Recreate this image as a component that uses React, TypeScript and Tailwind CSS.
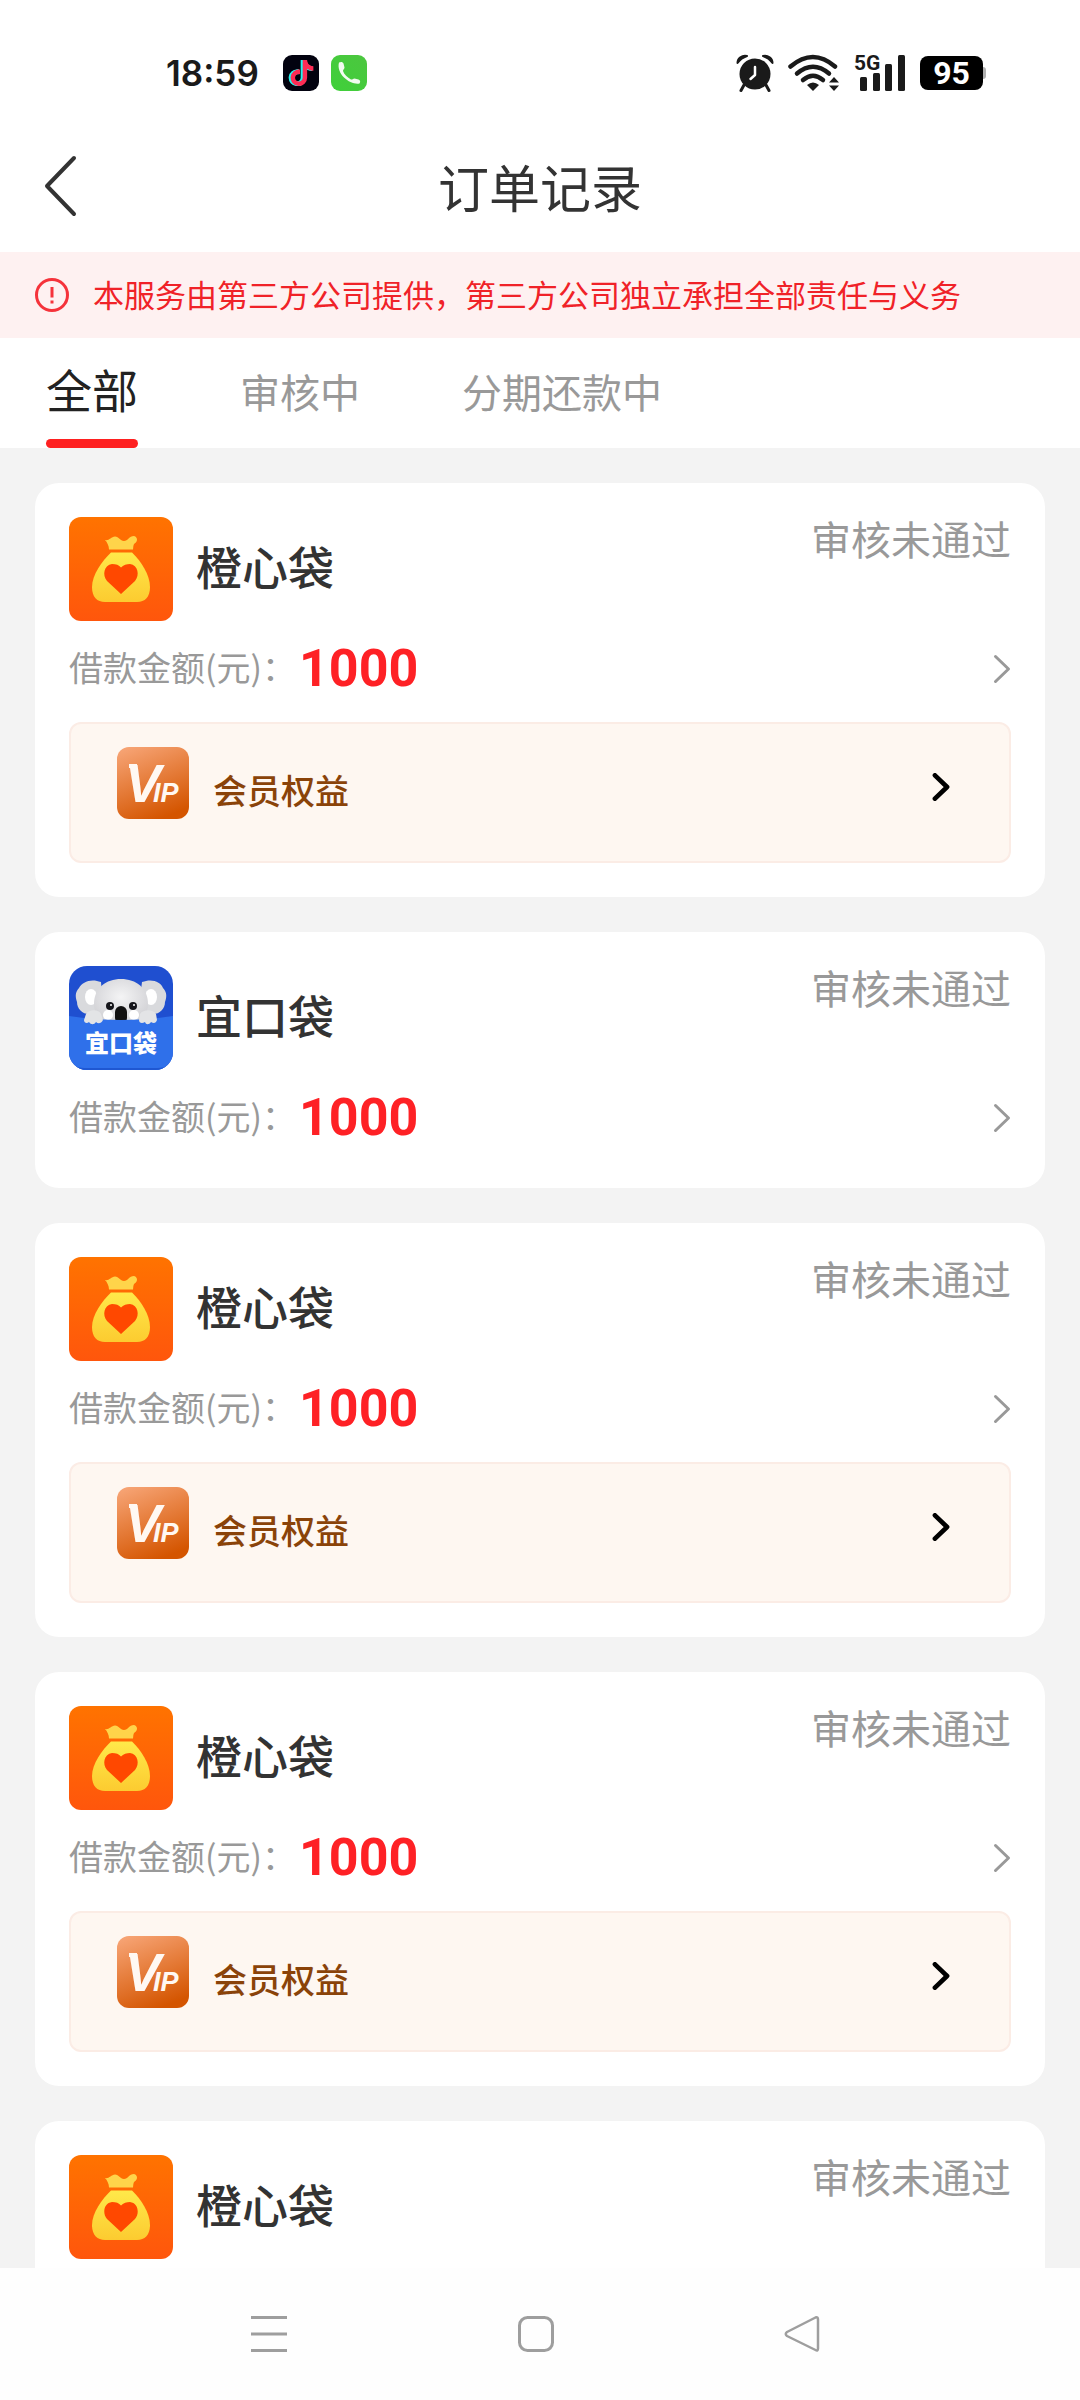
import React from "react";
import { FaTiktok } from "react-icons/fa";

type Order = {
  id: number;
  name: string;
  logo: "bag" | "koala";
  amount: number;
  status: string;
  vip: boolean;
};

const orders: Order[] = [
  { id: 1, name: "橙心袋", logo: "bag", amount: 1000, status: "审核未通过", vip: true },
  { id: 2, name: "宜口袋", logo: "koala", amount: 1000, status: "审核未通过", vip: false },
  { id: 3, name: "橙心袋", logo: "bag", amount: 1000, status: "审核未通过", vip: true },
  { id: 4, name: "橙心袋", logo: "bag", amount: 1000, status: "审核未通过", vip: true },
  { id: 5, name: "橙心袋", logo: "bag", amount: 1000, status: "审核未通过", vip: true },
];

const tabs = ["全部", "审核中", "分期还款中"];

const BagLogo = () => (
  <svg viewBox="0 0 104 104" className="h-[104px] w-[104px] shrink-0 rounded-xl">
    <defs>
      <linearGradient id="bag-bg" x1="0" y1="0" x2="0" y2="1">
        <stop offset="0" stopColor="#ff7300" />
        <stop offset="1" stopColor="#ff560c" />
      </linearGradient>
      <linearGradient id="bag-fill" x1="0" y1="0" x2="0" y2="1">
        <stop offset="0" stopColor="#ffe94a" />
        <stop offset="1" stopColor="#fccb30" />
      </linearGradient>
    </defs>
    <rect width="104" height="104" fill="url(#bag-bg)" />
    <path
      d="M40 32.5C40 29 38 25 36 23C40 24 42 20 46 19.500C50 19.500 51 24 55 24C59 24 60 19 65 19C69 20 69 25 65 27Q64 29 64 32.500Z"
      fill="#ffd44a"
    />
    <path
      d="M42 35.500H63C72 44 81 58 81 70C81 80 76 85 68 85H36C28 85 23 80 23 70C23 58 33 44 42 35.500Z"
      fill="url(#bag-fill)"
    />
    <path
      d="M52 77 38 64C33 58 35 48 43 47C47 47 50 48 52 50.500C54 48 58 47 61 47C69 48 71 58 66 64Z"
      fill="#ff4800"
    />
  </svg>
);

const KoalaLogo = () => (
  <svg viewBox="0 0 104 104" className="h-[104px] w-[104px] shrink-0 rounded-[18px]">
    <defs>
      <radialGradient id="koala-head" cx="0.5" cy="0.4" r="0.65">
        <stop offset="0" stopColor="#f4f4f5" />
        <stop offset="1" stopColor="#cfcfd3" />
      </radialGradient>
    </defs>
    <rect width="104" height="104" fill="#1f4fd0" />
    <g fill="#d9dadd">
      <path d="M32 16C22 12 13 16 10 22C5 27 7 33 8 36C8 43 14 49 22 48L34 40Z" />
      <path d="M73 16C83 12 92 16 94 22C99 27 97 33 96 36C96 43 90 49 82 48L70 40Z" />
    </g>
    <ellipse cx="22" cy="31" rx="6" ry="8" fill="#fff" />
    <ellipse cx="82" cy="31" rx="6" ry="8" fill="#fff" />
    <path d="M25 38C25 22 37 13 52 13C67 13 79 22 79 38C79 50 70 58 52 58C34 58 25 50 25 38Z" fill="url(#koala-head)" />
    <circle cx="39" cy="49" r="5" fill="#fff" />
    <circle cx="65" cy="49" r="5" fill="#fff" />
    <circle cx="41" cy="40" r="4" fill="#15151a" />
    <circle cx="64" cy="40" r="4" fill="#15151a" />
    <circle cx="42" cy="39" r="1" fill="#fff" />
    <circle cx="65" cy="39" r="1" fill="#fff" />
    <rect x="46" y="40" width="12" height="18" rx="6" fill="#111" />
    <path d="M0 50Q52 58 104 50V104H0Z" fill="#2f70ea" />
    <path d="M0 88Q0 102 16 102H88Q104 102 104 88V104H0Z" fill="#1f57d2" />
    <g fill="#e3e4e6">
      <path d="M17 48C20 43 30 43 32 48L34 54C32 58 29 58 27 56C25 59 22 59 20 56C18 58 15 57 15 54Z" />
      <path d="M71 48C74 43 84 43 87 48L88 54C87 57 85 58 82 56C80 59 77 59 76 56C73 58 70 57 70 54Z" />
    </g>
    <text
      x="52"
      y="86"
      textAnchor="middle"
      fill="#fff"
      fontSize="24"
      fontWeight="900"
      fontFamily="'Noto Sans CJK SC', sans-serif"
    >
      宜口袋
    </text>
  </svg>
);

const VipLogo = () => (
  <svg viewBox="0 0 72 72" className="h-[72px] w-[72px] shrink-0 rounded-xl">
    <defs>
      <linearGradient id="vip-bg" x1="0.2" y1="0" x2="0.6" y2="1">
        <stop offset="0" stopColor="#f6a272" />
        <stop offset="1" stopColor="#d45500" />
      </linearGradient>
    </defs>
    <rect width="72" height="72" fill="url(#vip-bg)" />
    <text
      x="8"
      y="55"
      fontSize="54"
      fontWeight="700"
      fontStyle="italic"
      fontFamily="'Liberation Sans', Arial, sans-serif"
      fill="#fff8f2"
    >
      V
      <tspan dx="-8" fontSize="27">
        IP
      </tspan>
    </text>
    <rect x="12" y="17" width="8" height="4" fill="#fff8f2" />
  </svg>
);

const AlarmIcon = () => (
  <svg viewBox="0 0 38 38" className="h-[38px] w-[38px]">
    <path d="M8 31 5 36.500M30 31 33 36.500" stroke="#1a1a1a" strokeWidth="3" strokeLinecap="round" />
    <circle cx="19" cy="20" r="15.500" fill="#1a1a1a" />
    <path d="M1.500 9C1.500 4 6 1 11 2Q5 4 1.500 9ZM36.500 9C36.500 4 32 1 27 2Q33 4 36.500 9Z" fill="#1a1a1a" stroke="#1a1a1a" strokeWidth="2" strokeLinejoin="round" />
    <path d="M19 13V21L14.500 25" fill="none" stroke="#fff" strokeWidth="2.500" strokeLinecap="round" strokeLinejoin="round" />
  </svg>
);

const WifiIcon = () => (
  <svg viewBox="0 0 52 38" className="h-[38px] w-[52px]">
    <g fill="none" stroke="#1a1a1a" strokeWidth="4.500" strokeLinecap="round">
      <path d="M2.500 12.500Q25 -6.500 47 12.500" />
      <path d="M9 19.500Q25 6 41 19.500" />
      <path d="M15 26Q25 17.500 35 26" />
    </g>
    <path d="M19 31Q25 26 31 31L25 37Z" fill="#1a1a1a" />
    <path d="M41 28.500 46 23 51 28.500ZM41 31.500 46 37 51 31.500Z" fill="#1a1a1a" />
  </svg>
);

const SignalIcon = () => (
  <svg viewBox="0 -6 52 50" className="h-[50px] w-[52px]">
    <text x="0" y="16" fontSize="21" fontWeight="700" fill="#1a1a1a" fontFamily="Roboto, sans-serif">
      5G
    </text>
    <g fill="#1a1a1a">
      <rect x="6" y="23" width="7" height="14" rx="1.500" />
      <rect x="19" y="19" width="7" height="18" rx="1.500" />
      <rect x="31" y="10" width="7" height="27" rx="1.500" />
      <rect x="44" y="1" width="7" height="36" rx="1.500" />
    </g>
  </svg>
);

const PhoneIcon = () => (
  <svg viewBox="0 0 36 36" className="h-9 w-9">
    <defs>
      <linearGradient id="phone-bg" x1="1" y1="0" x2="0" y2="1">
        <stop offset="0" stopColor="#4cc63f" />
        <stop offset="1" stopColor="#3fd03a" />
      </linearGradient>
    </defs>
    <rect width="36" height="36" rx="9" fill="url(#phone-bg)" />
    <path
      d="M8 7.500C10 6.500 12 7 12.500 8.500L13.500 12.500C13.500 14 12 14.500 12 16C13 19.500 16.500 22.500 20 24.500C21.500 25 22 23.500 23.500 23.500L27.500 24.500C29.500 25 29.500 27 28.500 28.500C24 29.500 17.500 27 13 22.500C9 18.500 6.500 13 8 7.500Z"
      fill="#f2fbf0"
    />
  </svg>
);

const StatusBar = () => (
  <div className="flex h-[122px] shrink-0 items-center justify-between pt-6 pr-[94px] pl-[166px]">
    <div className="flex items-center gap-3">
      <span className="mr-3 font-[Inter,sans-serif] text-[35px] leading-10 font-semibold text-[#1a1a1a]">18:59</span>
      <span className="grid h-9 w-9 place-items-center rounded-[9px] bg-[#02020f]">
        <FaTiktok className="col-start-1 row-start-1 h-[26px] w-[26px] -translate-x-px text-[#25f4ee]" />
        <FaTiktok className="col-start-1 row-start-1 h-[26px] w-[26px] translate-x-px text-[#fe2c55]" />
        <FaTiktok className="col-start-1 row-start-1 h-[26px] w-[26px] text-white" />
      </span>
      <PhoneIcon />
    </div>
    <div className="flex items-center gap-[14px]">
      <AlarmIcon />
      <WifiIcon />
      <SignalIcon />
      <div className="flex items-center">
        <span className="flex h-[34px] w-[63px] items-center justify-center rounded-lg bg-black font-[Roboto,sans-serif] text-[32px] leading-[34px] font-bold text-white">
          95
        </span>
        <span className="h-3 w-[3px] rounded-r-full bg-[#b0b0b0]" />
      </div>
    </div>
  </div>
);

const Chevron = ({ className, strokeWidth }: { className: string; strokeWidth: number }) => (
  <svg
    viewBox="0 0 18 30"
    className={className}
    fill="none"
    stroke="currentColor"
    strokeWidth={strokeWidth}
    strokeLinecap="round"
    strokeLinejoin="round"
  >
    <path d="M2.500 2.500 15.500 15 2.500 27.500" />
  </svg>
);

const OrderCard = ({ order }: { order: Order }) => (
  <article className="shrink-0 rounded-3xl bg-white px-[34px] py-[34px]">
    <div className="flex items-start justify-between">
      <div className="flex items-center gap-[23px]">
        {order.logo === "bag" ? <BagLogo /> : <KoalaLogo />}
        <h2 className="pb-2 text-[46px] leading-[60px] font-medium text-[#333]">{order.name}</h2>
      </div>
      <span className="text-[40px] leading-[42px] text-[#999]">{order.status}</span>
    </div>
    <button type="button" className="flex h-[84px] w-full items-center pt-3 text-left">
      <span className="pb-1 text-[34px] leading-10 text-[#999]">借款金额(元)：</span>
      <span className="ml-[3px] font-[Roboto,sans-serif] text-[52px] leading-[60px] font-bold text-[#fe2125]">
        {order.amount}
      </span>
      <Chevron className="ml-auto h-[30px] w-[18px] text-[#999]" strokeWidth={3} />
    </button>
    {order.vip && (
      <button
        type="button"
        className="mt-[17px] flex h-[141px] w-full items-start rounded-xl border-2 border-[#fbece5] bg-[#fef7f1] pt-[23px] pr-[59px] pl-[46px] text-left"
      >
        <VipLogo />
        <span className="ml-6 pt-4 text-[34px] leading-[54px] font-medium text-[#8a4309]">会员权益</span>
        <span className="ml-auto flex h-20 items-center">
          <Chevron className="h-7 w-[18px] text-black" strokeWidth={5} />
        </span>
      </button>
    )}
  </article>
);

const App: React.FC = () => {
  return (
    <div className="flex h-screen flex-col bg-white font-['Noto_Sans_CJK_SC',sans-serif]">
      <StatusBar />

      <header className="grid h-[130px] shrink-0 grid-cols-[1fr_auto_1fr] items-center px-[43px] pb-[3px]">
        <button type="button" aria-label="返回" className="w-9 text-[#333]">
          <svg viewBox="0 0 34 62" className="h-[62px] w-[34px]" fill="none" stroke="currentColor" strokeWidth="4" strokeLinecap="round" strokeLinejoin="round">
            <path d="M31 3 4 31 31 59" />
          </svg>
        </button>
        <h1 className="text-[51px] leading-[60px] text-[#333]">订单记录</h1>
      </header>

      <div className="flex h-[86px] shrink-0 items-center gap-[23px] bg-[#fef1f1] pl-[34px] text-[#f02228]">
        <svg viewBox="0 0 36 36" className="h-9 w-9 shrink-0" fill="none" stroke="#f5333b" strokeWidth="3">
          <circle cx="18" cy="18" r="15.500" />
          <path d="M18 10V20.500M18 23.500V26.500" />
        </svg>
        <p className="pb-[3px] text-[31px] leading-10 whitespace-nowrap">
          本服务由第三方公司提供，第三方公司独立承担全部责任与义务
        </p>
      </div>

      <div role="tablist" className="flex h-[110px] shrink-0 gap-[102px] px-[46px]">
        {tabs.map((tab, i) => (
          <button
            key={tab}
            type="button"
            role="tab"
            aria-selected={i === 0}
            className={
              i === 0
                ? "flex flex-col justify-between pt-5 text-[46px] leading-[60px] text-[#222]"
                : "pb-1 text-[40px] leading-[60px] text-[#999]"
            }
          >
            {tab}
            {i === 0 && <span className="h-[9px] w-full rounded-full bg-[#fe2020]" />}
          </button>
        ))}
      </div>

      <main className="flex min-h-0 flex-1 flex-col gap-[35px] overflow-y-auto bg-[#f3f3f3] px-[35px] pt-[35px] [scrollbar-width:none]">
        {orders.map((order) => (
          <OrderCard key={order.id} order={order} />
        ))}
      </main>

      <nav className="flex h-[132px] shrink-0 items-center justify-center gap-[229px] bg-[#fefefe] pr-2 text-[#9e9e9e]">
        <button type="button" aria-label="最近任务">
          <svg viewBox="0 0 38 38" className="h-[38px] w-[38px]" stroke="currentColor" strokeWidth="3">
            <path d="M1 2.500H37M1 19H37M1 35.500H37" />
          </svg>
        </button>
        <button type="button" aria-label="主屏幕">
          <svg viewBox="0 0 38 38" className="h-[38px] w-[38px]" fill="none" stroke="currentColor" strokeWidth="3">
            <rect x="2.500" y="2.500" width="33" height="33" rx="8" />
          </svg>
        </button>
        <button type="button" aria-label="后退">
          <svg viewBox="0 0 38 38" className="h-[38px] w-[38px]" fill="none" stroke="currentColor" strokeWidth="2.500" strokeLinejoin="round">
            <path d="M31.500 2.500Q34 1.500 34 4.500V33.500Q34 36.500 31.500 35L3 21Q0.500 19 3 17Z" />
          </svg>
        </button>
      </nav>
    </div>
  );
};

export default App;
